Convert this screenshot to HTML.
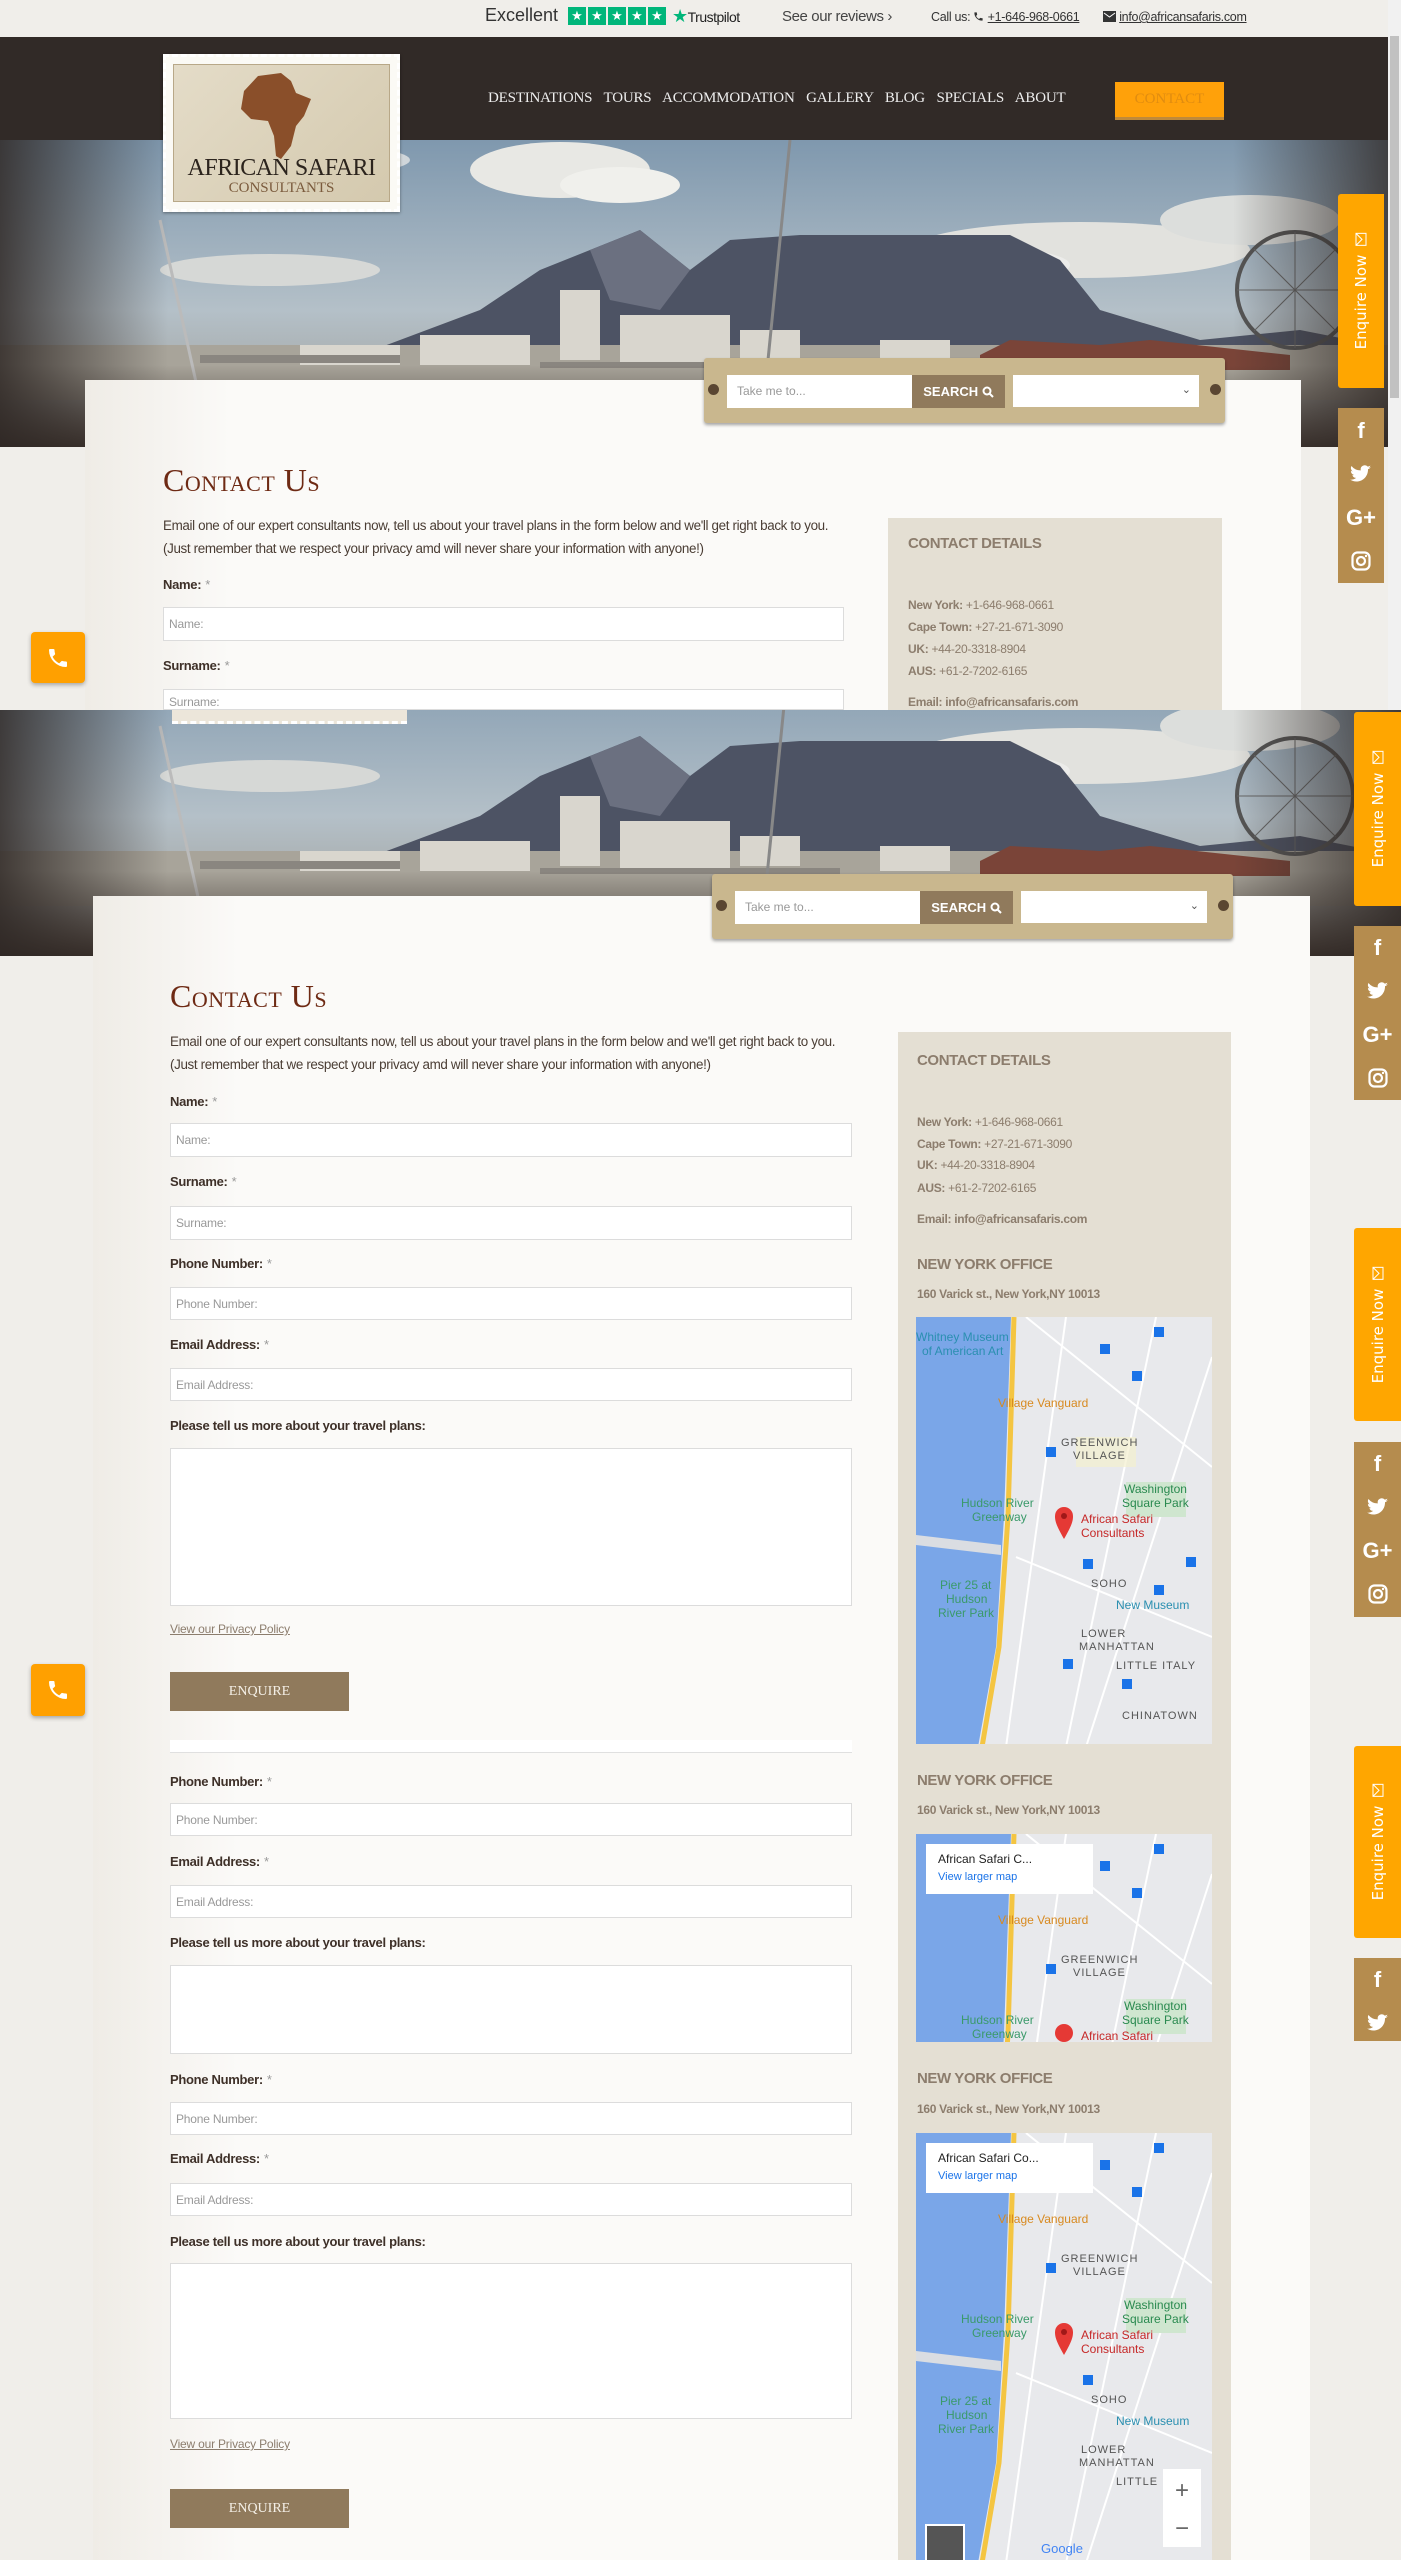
<!DOCTYPE html>
<html><head><meta charset="utf-8">
<style>
*{margin:0;padding:0;box-sizing:border-box}
html,body{width:1401px;height:2560px;overflow:hidden;background:#f0eeea;font-family:"Liberation Sans Narrow","Liberation Sans",sans-serif;}
.a{position:absolute}
.lab{position:absolute;font-size:13px;font-weight:bold;color:#3e3028;letter-spacing:-0.3px}
.lab i{font-style:normal;color:#999;font-weight:normal;margin-left:4px}
.inp{position:absolute;background:#fff;border:1px solid #dcdcdc;font-size:12px;color:#999;padding-left:5px;display:flex;align-items:center;letter-spacing:-0.2px}
.side{position:absolute;background:#e4dfd3}
.sd{position:absolute;font-size:12px;color:#8c7d6d;letter-spacing:-0.3px}
.sd b{font-weight:bold}
.sh{position:absolute;font-size:15px;font-weight:bold;color:#8c7d6d;letter-spacing:-0.4px}
.h1{position:absolute;font-family:"Liberation Serif",serif;font-variant:small-caps;font-size:32px;color:#6e2a14;letter-spacing:0.5px}
.intro{position:absolute;font-size:13.4px;color:#4a3d34;line-height:23px;letter-spacing:-0.35px}
.btn{position:absolute;background:#907a5c;color:#f4efe6;font-family:"Liberation Serif",serif;font-size:14px;display:flex;align-items:center;justify-content:center}
.priv{position:absolute;font-size:12px;color:#8c7d6d;text-decoration:underline;letter-spacing:-0.2px}
.enq{position:absolute;background:#ffa600;border-radius:3px 0 0 3px}
.enq span{position:absolute;left:50%;top:50%;transform:translate(-50%,-50%) rotate(-90deg);color:#fff;font-size:15px;white-space:nowrap;font-family:"DejaVu Sans",sans-serif;display:flex;align-items:center;gap:8px}
.soc{position:absolute;background:#b58c4e}
.soc div{height:43.5px;display:flex;align-items:center;justify-content:center;color:#fff;font-family:"Liberation Sans",sans-serif;font-weight:bold;font-size:22px}
.ph{position:absolute;background:#ffa000;border-radius:4px;box-shadow:0 2px 4px rgba(0,0,0,.3);display:flex;align-items:center;justify-content:center}
</style></head><body>

<!-- top bar -->
<div class="a" style="left:485px;top:5px;font-family:'Liberation Sans',sans-serif;font-size:18px;color:#333">Excellent</div>
<div class="a" style="left:568px;top:7px;display:flex;gap:2px">
<div style="width:18px;height:18px;background:#00b67a;color:#fff;font-size:13px;text-align:center;line-height:18px">★</div><div style="width:18px;height:18px;background:#00b67a;color:#fff;font-size:13px;text-align:center;line-height:18px">★</div><div style="width:18px;height:18px;background:#00b67a;color:#fff;font-size:13px;text-align:center;line-height:18px">★</div><div style="width:18px;height:18px;background:#00b67a;color:#fff;font-size:13px;text-align:center;line-height:18px">★</div><div style="width:18px;height:18px;background:#00b67a;color:#fff;font-size:13px;text-align:center;line-height:18px">★</div></div>
<div class="a" style="left:672px;top:6px;font-family:'Liberation Sans',sans-serif;font-size:14px;color:#222;letter-spacing:-0.5px"><span style="color:#00b67a;font-size:18px">★</span>Trustpilot</div>
<div class="a" style="left:782px;top:8px;font-size:15px;color:#444;letter-spacing:-0.4px">See our reviews ›</div>
<div class="a" style="left:931px;top:10px;font-size:12.5px;color:#333;letter-spacing:-0.3px">Call us: <svg width="11" height="11" viewBox="0 0 24 24" style="vertical-align:-1px"><path d="M6.6 10.8a15 15 0 0 0 6.6 6.6l2.2-2.2a1 1 0 0 1 1-.25 11.4 11.4 0 0 0 3.6.57 1 1 0 0 1 1 1V20a1 1 0 0 1-1 1A17 17 0 0 1 3 4a1 1 0 0 1 1-1h3.5a1 1 0 0 1 1 1c0 1.25.2 2.45.57 3.57a1 1 0 0 1-.25 1z" fill="#333"/></svg> <u>+1-646-968-0661</u></div>
<div class="a" style="left:1103px;top:10px;font-size:12.5px;color:#333;letter-spacing:-0.3px"><svg width="13" height="11" viewBox="0 0 13 11" style="vertical-align:-1px"><rect width="13" height="11" fill="#333"/><path d="M1 2 L6.5 6 L12 2" stroke="#fff" fill="none"/></svg> <u>info@africansafaris.com</u></div>
<!-- scrollbar -->
<div class="a" style="left:1388px;top:0;width:13px;height:710px;background:#f1f1f1"></div>
<div class="a" style="left:1390px;top:36px;width:9px;height:362px;background:#c1c1c1"></div>

<!-- header dark -->
<div class="a" style="left:0;top:37px;width:1388px;height:103px;background:#312a27"></div>
<div class="a" style="left:488px;top:90px;font-family:'Liberation Serif',serif;font-size:15px;color:#eee;word-spacing:8px;letter-spacing:-0.2px">DESTINATIONS TOURS ACCOMMODATION GALLERY BLOG SPECIALS ABOUT</div>
<div class="a" style="left:1115px;top:82px;width:109px;height:38px;background:#ffa10a;border-bottom:3px solid #c08a3a;color:#e08c10;font-family:'Liberation Serif',serif;font-size:15px;display:flex;align-items:center;justify-content:center">CONTACT</div>

<!-- hero 1 -->
<div class="a" style="left:0;top:140px;width:1388px;height:307px;overflow:hidden">
<svg width="1401" height="310" viewBox="0 0 1401 310">
<defs><linearGradient id="sk" x1="0" y1="0" x2="0" y2="1"><stop offset="0" stop-color="#7f98ae"/><stop offset=".55" stop-color="#b4c0c8"/><stop offset="1" stop-color="#9a958c"/></linearGradient>
<linearGradient id="vg" x1="0" y1="0" x2="1" y2="0"><stop offset="0" stop-color="#2e2724" stop-opacity=".85"/><stop offset=".12" stop-color="#2e2724" stop-opacity="0"/><stop offset=".88" stop-color="#2e2724" stop-opacity="0"/><stop offset="1" stop-color="#2e2724" stop-opacity=".85"/></linearGradient>
<linearGradient id="bt" x1="0" y1="0" x2="0" y2="1"><stop offset="0" stop-color="#3a302b" stop-opacity="0"/><stop offset="1" stop-color="#3a302b"/></linearGradient>
<g id="hero">
<rect width="1401" height="310" fill="url(#sk)"/>
<ellipse cx="560" cy="30" rx="90" ry="28" fill="#e8e8e4"/><ellipse cx="620" cy="45" rx="60" ry="18" fill="#f0f0ec"/>
<ellipse cx="1080" cy="110" rx="170" ry="28" fill="#e2e2de"/><ellipse cx="980" cy="125" rx="90" ry="18" fill="#ececea"/>
<ellipse cx="640" cy="150" rx="80" ry="22" fill="#e4e4e0"/><ellipse cx="270" cy="130" rx="110" ry="16" fill="#d6d8d6"/><ellipse cx="1250" cy="80" rx="90" ry="25" fill="#dcdedc"/><ellipse cx="330" cy="20" rx="80" ry="14" fill="#d0d6da"/>
<polygon points="360,215 480,170 540,130 590,110 640,90 690,130 730,100 800,95 1010,95 1060,120 1100,170 1200,200 1300,190 1401,210 1401,240 360,240" fill="#4d5364"/>
<polygon points="590,110 640,90 690,130 660,170 610,160" fill="#6b7080"/>
<rect x="0" y="205" width="1401" height="55" fill="#a8a49a"/>
<g fill="#d9d6ce"><rect x="560" y="150" width="40" height="70"/><rect x="620" y="175" width="110" height="50"/><rect x="420" y="195" width="110" height="30"/><rect x="740" y="190" width="60" height="30"/><rect x="300" y="205" width="100" height="20"/><rect x="880" y="200" width="70" height="25"/></g>
<g fill="#8a8680"><rect x="200" y="215" width="200" height="8"/><rect x="540" y="222" width="300" height="6"/></g>
<polygon points="980,215 1010,200 1100,205 1150,200 1290,215 1290,230 980,230" fill="#7a4438"/>
<circle cx="1295" cy="150" r="58" fill="none" stroke="#555" stroke-width="4"/>
<g stroke="#666" stroke-width="1"><line x1="1295" y1="92" x2="1295" y2="208"/><line x1="1237" y1="150" x2="1353" y2="150"/><line x1="1254" y1="109" x2="1336" y2="191"/><line x1="1336" y1="109" x2="1254" y2="191"/></g>
<line x1="790" y1="0" x2="760" y2="300" stroke="#888" stroke-width="3"/>
<line x1="160" y1="80" x2="200" y2="260" stroke="#bbb" stroke-width="3"/>
<rect x="0" y="225" width="1401" height="85" fill="url(#bt)"/>
<rect width="1401" height="310" fill="url(#vg)"/>
</g></defs>
<use href="#hero"/>
</svg></div>

<!-- logo -->
<div class="a" style="left:163px;top:54px;width:237px;height:158px;background:#fbfaf5;border:3px dashed #fff;box-shadow:0 1px 3px rgba(0,0,0,.4)">
<div style="position:absolute;left:7px;top:7px;right:7px;bottom:7px;background:linear-gradient(135deg,#e4dcc8,#d4c9ae);border:1px solid #b8a888"></div>
<svg class="a" style="left:70px;top:14px" width="80" height="90" viewBox="0 0 80 90"><path d="M22 5 L45 2 L55 10 L60 22 L75 28 L68 45 L60 55 L55 75 L45 88 L40 85 L38 65 L32 50 L15 48 L5 38 L8 20 Z" fill="#8a4f2a"/></svg>
<div class="a" style="left:0;width:231px;top:98px;text-align:center;font-family:'Liberation Serif',serif;font-size:24px;color:#2c241d;letter-spacing:-0.5px">AFRICAN SAFARI</div>
<div class="a" style="left:0;width:231px;top:123px;text-align:center;font-family:'Liberation Serif',serif;font-size:15px;color:#7a5a3c">CONSULTANTS</div>
</div>

<!-- panel 1 -->
<div class="a" style="left:85px;top:380px;width:1216px;height:330px;background:linear-gradient(90deg,#efece6,#fbfaf8 12%,#fbfaf8)"></div>
<div class="a" style="left:704px;top:358px;width:521px;height:65px;background:#c9b78e;border-radius:3px;box-shadow:0 2px 3px rgba(0,0,0,.35)">
<div class="a" style="left:4px;top:26px;width:11px;height:11px;border-radius:50%;background:#5a4632"></div>
<div class="a" style="right:4px;top:26px;width:11px;height:11px;border-radius:50%;background:#5a4632"></div>
<div class="a" style="left:23px;top:17px;width:185px;height:33px;background:#fff;font-size:12px;color:#999;padding:9px 10px">Take me to...</div>
<div class="a" style="left:208px;top:17px;width:93px;height:33px;background:#907a5c;color:#fff;font-size:13px;font-weight:bold;display:flex;align-items:center;justify-content:center">SEARCH&nbsp;<svg width="12" height="12" viewBox="0 0 12 12"><circle cx="5" cy="5" r="3.5" stroke="#fff" stroke-width="2" fill="none"/><line x1="7.5" y1="7.5" x2="11" y2="11" stroke="#fff" stroke-width="2"/></svg></div>
<div class="a" style="left:309px;top:17px;width:186px;height:32px;background:#fff;font-size:11px;color:#555;text-align:right;padding:8px 8px">⌄</div>
</div>
<div class="h1" style="left:163px;top:462px">Contact Us</div>
<div class="intro" style="left:163px;top:514px">Email one of our expert consultants now, tell us about your travel plans in the form below and we'll get right back to you.<br>(Just remember that we respect your privacy amd will never share your information with anyone!)</div>
<div class="lab" style="left:163px;top:577px">Name:<i>*</i></div>
<div class="inp" style="left:163px;top:607px;width:681px;height:34px">Name:</div>
<div class="lab" style="left:163px;top:658px">Surname:<i>*</i></div>
<div class="inp" style="left:163px;top:689px;width:681px;height:21px;align-items:flex-end">Surname:</div>
<div class="side" style="left:888px;top:518px;width:334px;height:192px"></div>
<div class="sh" style="left:908px;top:535px">CONTACT DETAILS</div>
<div class="sd" style="left:908px;top:598px"><b>New York:</b> +1-646-968-0661</div>
<div class="sd" style="left:908px;top:620px"><b>Cape Town:</b> +27-21-671-3090</div>
<div class="sd" style="left:908px;top:642px"><b>UK:</b> +44-20-3318-8904</div>
<div class="sd" style="left:908px;top:664px"><b>AUS:</b> +61-2-7202-6165</div>
<div class="sd" style="left:908px;top:695px"><b>Email: info@africansafaris.com</b></div>

<div class="enq" style="left:1338px;top:194px;width:46px;height:194px"><span>Enquire Now <svg width="14" height="12" viewBox="0 0 14 12"><rect x="1" y="1" width="12" height="10" fill="none" stroke="#fff"/><path d="M1 1 L7 7 L13 1" stroke="#fff" fill="none"/></svg></span></div>
<div class="soc" style="left:1338px;top:408px;width:46px;height:175px;padding-top:1px">
<div>f</div>
<div><svg width="22" height="20" viewBox="0 0 24 22"><path d="M23 3.6a9 9 0 0 1-2.6.7 4.6 4.6 0 0 0 2-2.5 9 9 0 0 1-2.9 1.1 4.5 4.5 0 0 0-7.7 4.1A12.8 12.8 0 0 1 1.5 2.2a4.5 4.5 0 0 0 1.4 6 4.5 4.5 0 0 1-2-.6v.1a4.5 4.5 0 0 0 3.6 4.4 4.5 4.5 0 0 1-2 .1 4.5 4.5 0 0 0 4.2 3.1A9 9 0 0 1 0 17.2a12.8 12.8 0 0 0 6.9 2c8.3 0 12.8-6.9 12.8-12.8v-.6A9 9 0 0 0 23 3.6z" fill="#fff"/></svg></div>
<div>G+</div>
<div><svg width="20" height="20" viewBox="0 0 20 20"><rect x="1.5" y="1.5" width="17" height="17" rx="5" stroke="#fff" stroke-width="2.2" fill="none"/><circle cx="10" cy="10" r="4" stroke="#fff" stroke-width="2.2" fill="none"/><circle cx="15" cy="5" r="1.2" fill="#fff"/></svg></div>
</div>
<div class="ph" style="left:31px;top:632px;width:54px;height:51px"><svg width="24" height="24" viewBox="0 0 24 24"><path d="M6.6 10.8a15 15 0 0 0 6.6 6.6l2.2-2.2a1 1 0 0 1 1-.25 11.4 11.4 0 0 0 3.6.57 1 1 0 0 1 1 1V20a1 1 0 0 1-1 1A17 17 0 0 1 3 4a1 1 0 0 1 1-1h3.5a1 1 0 0 1 1 1c0 1.25.2 2.45.57 3.57a1 1 0 0 1-.25 1z" fill="#fff"/></svg></div>

<!-- SECOND COPY -->
<div class="a" style="left:0;top:710px;width:1401px;height:253px;overflow:hidden">
<svg width="1401" height="310" viewBox="0 0 1401 310" style="position:absolute;left:0;top:-64px"><use href="#hero"/></svg></div>
<div class="a" style="left:172px;top:710px;width:235px;height:14px;background:#ece6da;border-bottom:3px dashed #fff"></div>

<div class="a" style="left:93px;top:896px;width:1217px;height:1664px;background:linear-gradient(90deg,#efece6,#fbfaf8 12%,#fbfaf8)"></div>
<div class="a" style="left:712px;top:874px;width:521px;height:65px;background:#c9b78e;border-radius:3px;box-shadow:0 2px 3px rgba(0,0,0,.35)">
<div class="a" style="left:4px;top:26px;width:11px;height:11px;border-radius:50%;background:#5a4632"></div>
<div class="a" style="right:4px;top:26px;width:11px;height:11px;border-radius:50%;background:#5a4632"></div>
<div class="a" style="left:23px;top:17px;width:185px;height:33px;background:#fff;font-size:12px;color:#999;padding:9px 10px">Take me to...</div>
<div class="a" style="left:208px;top:17px;width:93px;height:33px;background:#907a5c;color:#fff;font-size:13px;font-weight:bold;display:flex;align-items:center;justify-content:center">SEARCH&nbsp;<svg width="12" height="12" viewBox="0 0 12 12"><circle cx="5" cy="5" r="3.5" stroke="#fff" stroke-width="2" fill="none"/><line x1="7.5" y1="7.5" x2="11" y2="11" stroke="#fff" stroke-width="2"/></svg></div>
<div class="a" style="left:309px;top:17px;width:186px;height:32px;background:#fff;font-size:11px;color:#555;text-align:right;padding:8px 8px">⌄</div>
</div>
<div class="h1" style="left:170px;top:978px">Contact Us</div>
<div class="intro" style="left:170px;top:1030px">Email one of our expert consultants now, tell us about your travel plans in the form below and we'll get right back to you.<br>(Just remember that we respect your privacy amd will never share your information with anyone!)</div>

<div class="lab" style="left:170px;top:1094px">Name:<i>*</i></div>
<div class="inp" style="left:170px;top:1123px;width:682px;height:34px">Name:</div>
<div class="lab" style="left:170px;top:1174px">Surname:<i>*</i></div>
<div class="inp" style="left:170px;top:1206px;width:682px;height:34px">Surname:</div>
<div class="lab" style="left:170px;top:1256px">Phone Number:<i>*</i></div>
<div class="inp" style="left:170px;top:1287px;width:682px;height:33px">Phone Number:</div>
<div class="lab" style="left:170px;top:1337px">Email Address:<i>*</i></div>
<div class="inp" style="left:170px;top:1368px;width:682px;height:33px">Email Address:</div>
<div class="lab" style="left:170px;top:1418px">Please tell us more about your travel plans:</div>
<div class="inp" style="left:170px;top:1448px;width:682px;height:158px"></div>
<div class="priv" style="left:170px;top:1622px">View our Privacy Policy</div>
<div class="btn" style="left:170px;top:1672px;width:179px;height:39px">ENQUIRE</div>

<div class="a" style="left:170px;top:1740px;width:682px;height:13px;background:#fff;border-bottom:1px solid #e0e0e0"></div>
<div class="lab" style="left:170px;top:1774px">Phone Number:<i>*</i></div>
<div class="inp" style="left:170px;top:1803px;width:682px;height:33px">Phone Number:</div>
<div class="lab" style="left:170px;top:1854px">Email Address:<i>*</i></div>
<div class="inp" style="left:170px;top:1885px;width:682px;height:33px">Email Address:</div>
<div class="lab" style="left:170px;top:1935px">Please tell us more about your travel plans:</div>
<div class="inp" style="left:170px;top:1965px;width:682px;height:89px"></div>
<div class="lab" style="left:170px;top:2072px">Phone Number:<i>*</i></div>
<div class="inp" style="left:170px;top:2102px;width:682px;height:33px">Phone Number:</div>
<div class="lab" style="left:170px;top:2151px">Email Address:<i>*</i></div>
<div class="inp" style="left:170px;top:2183px;width:682px;height:33px">Email Address:</div>
<div class="lab" style="left:170px;top:2234px">Please tell us more about your travel plans:</div>
<div class="inp" style="left:170px;top:2263px;width:682px;height:156px"></div>
<div class="priv" style="left:170px;top:2437px">View our Privacy Policy</div>
<div class="btn" style="left:170px;top:2489px;width:179px;height:39px">ENQUIRE</div>

<!-- sidebar 2 -->
<div class="side" style="left:898px;top:1032px;width:333px;height:1528px"></div>
<div class="sh" style="left:917px;top:1052px">CONTACT DETAILS</div>
<div class="sd" style="left:917px;top:1115px"><b>New York:</b> +1-646-968-0661</div>
<div class="sd" style="left:917px;top:1137px"><b>Cape Town:</b> +27-21-671-3090</div>
<div class="sd" style="left:917px;top:1158px"><b>UK:</b> +44-20-3318-8904</div>
<div class="sd" style="left:917px;top:1181px"><b>AUS:</b> +61-2-7202-6165</div>
<div class="sd" style="left:917px;top:1212px"><b>Email: info@africansafaris.com</b></div>

<div class="sh" style="left:917px;top:1256px">NEW YORK OFFICE</div>
<div class="sd" style="left:917px;top:1287px"><b>160 Varick st., New York,NY 10013</b></div>
<div class="sh" style="left:917px;top:1772px">NEW YORK OFFICE</div>
<div class="sd" style="left:917px;top:1803px"><b>160 Varick st., New York,NY 10013</b></div>
<div class="sh" style="left:917px;top:2070px">NEW YORK OFFICE</div>
<div class="sd" style="left:917px;top:2102px"><b>160 Varick st., New York,NY 10013</b></div>

<!-- maps -->
<div class="a" style="left:916px;top:1317px;width:296px;height:427px;overflow:hidden">
<svg width="296" height="430" viewBox="0 0 296 430" font-family="Liberation Sans,sans-serif">
<rect width="296" height="430" fill="#e8e9ec"/>
<polygon points="0,0 95,0 88,200 80,330 62,430 0,430" fill="#7aa6e8"/>
<polygon points="0,218 85,228 85,238 0,228" fill="#dadde2"/>
<path d="M98 0 L92 200 L83 330 L66 430" stroke="#f4c542" stroke-width="5" fill="none"/>
<g stroke="#fff" stroke-width="2"><line x1="110" y1="0" x2="296" y2="150"/><line x1="150" y1="0" x2="90" y2="430"/><line x1="240" y1="0" x2="150" y2="430"/><line x1="100" y1="240" x2="296" y2="320"/><line x1="296" y1="40" x2="170" y2="430"/></g>
<rect x="160" y="120" width="60" height="30" fill="#f3efcf" opacity=".7"/><rect x="210" y="165" width="60" height="35" fill="#cfe6cf"/>
<text x="0" y="24" font-size="12" fill="#2a8fb0">Whitney Museum</text><text x="6" y="38" font-size="12" fill="#2a8fb0">of American Art</text>
<text x="82" y="90" font-size="12" fill="#d88a20">Village Vanguard</text>
<text x="145" y="129" font-size="11" fill="#555" letter-spacing="1">GREENWICH</text><text x="157" y="142" font-size="11" fill="#555" letter-spacing="1">VILLAGE</text>
<text x="208" y="176" font-size="12" fill="#2a8a50">Washington</text><text x="206" y="190" font-size="12" fill="#2a8a50">Square Park</text>
<text x="45" y="190" font-size="12" fill="#3a9a6a">Hudson River</text><text x="56" y="204" font-size="12" fill="#3a9a6a">Greenway</text>
<path d="M148 222 C140 208 139 204 139 199 a9 9 0 1 1 18 0 C157 204 156 208 148 222 Z" fill="#e53935"/><circle cx="148" cy="199" r="3" fill="#a01818"/>
<text x="165" y="206" font-size="12" fill="#c62828">African Safari</text><text x="165" y="220" font-size="12" fill="#c62828">Consultants</text>
<text x="175" y="270" font-size="11" fill="#555" letter-spacing="1">SOHO</text>
<text x="200" y="292" font-size="12" fill="#2a8fb0">New Museum</text>
<text x="24" y="272" font-size="12" fill="#3a9a6a">Pier 25 at</text><text x="30" y="286" font-size="12" fill="#3a9a6a">Hudson</text><text x="22" y="300" font-size="12" fill="#3a9a6a">River Park</text>
<text x="165" y="320" font-size="11" fill="#555" letter-spacing="1">LOWER</text><text x="163" y="333" font-size="11" fill="#555" letter-spacing="1">MANHATTAN</text>
<text x="200" y="352" font-size="11" fill="#555" letter-spacing="1">LITTLE ITALY</text>
<text x="206" y="402" font-size="11" fill="#555" letter-spacing="1">CHINATOWN</text>
<g fill="#1a73e8"><rect x="238" y="10" width="10" height="10"/><rect x="184" y="27" width="10" height="10"/><rect x="216" y="54" width="10" height="10"/><rect x="130" y="130" width="10" height="10"/><rect x="270" y="240" width="10" height="10"/><rect x="167" y="242" width="10" height="10"/><rect x="238" y="268" width="10" height="10"/><rect x="147" y="342" width="10" height="10"/><rect x="206" y="362" width="10" height="10"/></g>
</svg></div>

<div class="a" style="left:916px;top:1834px;width:296px;height:208px;overflow:hidden">
<svg width="296" height="430" viewBox="0 0 296 430" font-family="Liberation Sans,sans-serif">
<rect width="296" height="430" fill="#e8e9ec"/>
<polygon points="0,0 95,0 88,200 80,330 62,430 0,430" fill="#7aa6e8"/>
<path d="M98 0 L92 200 L83 330 L66 430" stroke="#f4c542" stroke-width="5" fill="none"/>
<g stroke="#fff" stroke-width="2"><line x1="110" y1="0" x2="296" y2="150"/><line x1="150" y1="0" x2="90" y2="430"/><line x1="240" y1="0" x2="150" y2="430"/><line x1="296" y1="40" x2="170" y2="430"/></g>
<rect x="210" y="165" width="60" height="35" fill="#cfe6cf"/>
<text x="82" y="90" font-size="12" fill="#d88a20">Village Vanguard</text>
<text x="145" y="129" font-size="11" fill="#555" letter-spacing="1">GREENWICH</text><text x="157" y="142" font-size="11" fill="#555" letter-spacing="1">VILLAGE</text>
<text x="208" y="176" font-size="12" fill="#2a8a50">Washington</text><text x="206" y="190" font-size="12" fill="#2a8a50">Square Park</text>
<text x="45" y="190" font-size="12" fill="#3a9a6a">Hudson River</text><text x="56" y="204" font-size="12" fill="#3a9a6a">Greenway</text>
<circle cx="148" cy="199" r="9" fill="#e53935"/>
<text x="165" y="206" font-size="12" fill="#c62828">African Safari</text>
<g fill="#1a73e8"><rect x="238" y="10" width="10" height="10"/><rect x="184" y="27" width="10" height="10"/><rect x="216" y="54" width="10" height="10"/><rect x="130" y="130" width="10" height="10"/></g>
<rect x="10" y="10" width="167" height="50" fill="#fff"/>
<text x="22" y="29" font-size="12" fill="#222">African Safari C...</text><text x="22" y="46" font-size="11" fill="#1a73e8">View larger map</text>
</svg></div>

<div class="a" style="left:916px;top:2133px;width:296px;height:427px;overflow:hidden">
<svg width="296" height="430" viewBox="0 0 296 430" font-family="Liberation Sans,sans-serif">
<rect width="296" height="430" fill="#e8e9ec"/>
<polygon points="0,0 95,0 88,200 80,330 62,430 0,430" fill="#7aa6e8"/>
<polygon points="0,218 85,228 85,238 0,228" fill="#dadde2"/>
<path d="M98 0 L92 200 L83 330 L66 430" stroke="#f4c542" stroke-width="5" fill="none"/>
<g stroke="#fff" stroke-width="2"><line x1="110" y1="0" x2="296" y2="150"/><line x1="150" y1="0" x2="90" y2="430"/><line x1="240" y1="0" x2="150" y2="430"/><line x1="100" y1="240" x2="296" y2="320"/><line x1="296" y1="40" x2="170" y2="430"/></g>
<rect x="210" y="165" width="60" height="35" fill="#cfe6cf"/>
<text x="82" y="90" font-size="12" fill="#d88a20">Village Vanguard</text>
<text x="145" y="129" font-size="11" fill="#555" letter-spacing="1">GREENWICH</text><text x="157" y="142" font-size="11" fill="#555" letter-spacing="1">VILLAGE</text>
<text x="208" y="176" font-size="12" fill="#2a8a50">Washington</text><text x="206" y="190" font-size="12" fill="#2a8a50">Square Park</text>
<text x="45" y="190" font-size="12" fill="#3a9a6a">Hudson River</text><text x="56" y="204" font-size="12" fill="#3a9a6a">Greenway</text>
<path d="M148 222 C140 208 139 204 139 199 a9 9 0 1 1 18 0 C157 204 156 208 148 222 Z" fill="#e53935"/><circle cx="148" cy="199" r="3" fill="#a01818"/>
<text x="165" y="206" font-size="12" fill="#c62828">African Safari</text><text x="165" y="220" font-size="12" fill="#c62828">Consultants</text>
<text x="175" y="270" font-size="11" fill="#555" letter-spacing="1">SOHO</text>
<text x="200" y="292" font-size="12" fill="#2a8fb0">New Museum</text>
<text x="24" y="272" font-size="12" fill="#3a9a6a">Pier 25 at</text><text x="30" y="286" font-size="12" fill="#3a9a6a">Hudson</text><text x="22" y="300" font-size="12" fill="#3a9a6a">River Park</text>
<text x="165" y="320" font-size="11" fill="#555" letter-spacing="1">LOWER</text><text x="163" y="333" font-size="11" fill="#555" letter-spacing="1">MANHATTAN</text>
<text x="200" y="352" font-size="11" fill="#555" letter-spacing="1">LITTLE</text>
<g fill="#1a73e8"><rect x="238" y="10" width="10" height="10"/><rect x="184" y="27" width="10" height="10"/><rect x="216" y="54" width="10" height="10"/><rect x="130" y="130" width="10" height="10"/><rect x="167" y="242" width="10" height="10"/></g>
<rect x="10" y="10" width="167" height="50" fill="#fff"/>
<text x="22" y="29" font-size="12" fill="#222">African Safari Co...</text><text x="22" y="46" font-size="11" fill="#1a73e8">View larger map</text>
<rect x="247" y="336" width="38" height="78" fill="#fff"/>
<text x="266" y="365" font-size="24" fill="#666" text-anchor="middle">+</text><text x="266" y="403" font-size="24" fill="#666" text-anchor="middle">−</text>
<rect x="10" y="392" width="38" height="38" fill="#555" stroke="#fff" stroke-width="2"/>
<text x="125" y="420" font-size="13" fill="#4285f4">Google</text>
</svg></div>

<!-- right tabs 2 -->
<div class="enq" style="left:1354px;top:712px;width:47px;height:194px"><span>Enquire Now <svg width="14" height="12" viewBox="0 0 14 12"><rect x="1" y="1" width="12" height="10" fill="none" stroke="#fff"/><path d="M1 1 L7 7 L13 1" stroke="#fff" fill="none"/></svg></span></div>
<div class="soc" style="left:1354px;top:926px;width:47px;height:174px">
<div>f</div>
<div><svg width="22" height="20" viewBox="0 0 24 22"><path d="M23 3.6a9 9 0 0 1-2.6.7 4.6 4.6 0 0 0 2-2.5 9 9 0 0 1-2.9 1.1 4.5 4.5 0 0 0-7.7 4.1A12.8 12.8 0 0 1 1.5 2.2a4.5 4.5 0 0 0 1.4 6 4.5 4.5 0 0 1-2-.6v.1a4.5 4.5 0 0 0 3.6 4.4 4.5 4.5 0 0 1-2 .1 4.5 4.5 0 0 0 4.2 3.1A9 9 0 0 1 0 17.2a12.8 12.8 0 0 0 6.9 2c8.3 0 12.8-6.9 12.8-12.8v-.6A9 9 0 0 0 23 3.6z" fill="#fff"/></svg></div>
<div>G+</div>
<div><svg width="20" height="20" viewBox="0 0 20 20"><rect x="1.5" y="1.5" width="17" height="17" rx="5" stroke="#fff" stroke-width="2.2" fill="none"/><circle cx="10" cy="10" r="4" stroke="#fff" stroke-width="2.2" fill="none"/><circle cx="15" cy="5" r="1.2" fill="#fff"/></svg></div>
</div>
<div class="enq" style="left:1354px;top:1228px;width:47px;height:193px"><span>Enquire Now <svg width="14" height="12" viewBox="0 0 14 12"><rect x="1" y="1" width="12" height="10" fill="none" stroke="#fff"/><path d="M1 1 L7 7 L13 1" stroke="#fff" fill="none"/></svg></span></div>
<div class="soc" style="left:1354px;top:1442px;width:47px;height:175px">
<div>f</div>
<div><svg width="22" height="20" viewBox="0 0 24 22"><path d="M23 3.6a9 9 0 0 1-2.6.7 4.6 4.6 0 0 0 2-2.5 9 9 0 0 1-2.9 1.1 4.5 4.5 0 0 0-7.7 4.1A12.8 12.8 0 0 1 1.5 2.2a4.5 4.5 0 0 0 1.4 6 4.5 4.5 0 0 1-2-.6v.1a4.5 4.5 0 0 0 3.6 4.4 4.5 4.5 0 0 1-2 .1 4.5 4.5 0 0 0 4.2 3.1A9 9 0 0 1 0 17.2a12.8 12.8 0 0 0 6.9 2c8.3 0 12.8-6.9 12.8-12.8v-.6A9 9 0 0 0 23 3.6z" fill="#fff"/></svg></div>
<div>G+</div>
<div><svg width="20" height="20" viewBox="0 0 20 20"><rect x="1.5" y="1.5" width="17" height="17" rx="5" stroke="#fff" stroke-width="2.2" fill="none"/><circle cx="10" cy="10" r="4" stroke="#fff" stroke-width="2.2" fill="none"/><circle cx="15" cy="5" r="1.2" fill="#fff"/></svg></div>
</div>
<div class="enq" style="left:1354px;top:1746px;width:47px;height:192px"><span>Enquire Now <svg width="14" height="12" viewBox="0 0 14 12"><rect x="1" y="1" width="12" height="10" fill="none" stroke="#fff"/><path d="M1 1 L7 7 L13 1" stroke="#fff" fill="none"/></svg></span></div>
<div class="soc" style="left:1354px;top:1958px;width:47px;height:83px">
<div>f</div>
<div><svg width="22" height="20" viewBox="0 0 24 22"><path d="M23 3.6a9 9 0 0 1-2.6.7 4.6 4.6 0 0 0 2-2.5 9 9 0 0 1-2.9 1.1 4.5 4.5 0 0 0-7.7 4.1A12.8 12.8 0 0 1 1.5 2.2a4.5 4.5 0 0 0 1.4 6 4.5 4.5 0 0 1-2-.6v.1a4.5 4.5 0 0 0 3.6 4.4 4.5 4.5 0 0 1-2 .1 4.5 4.5 0 0 0 4.2 3.1A9 9 0 0 1 0 17.2a12.8 12.8 0 0 0 6.9 2c8.3 0 12.8-6.9 12.8-12.8v-.6A9 9 0 0 0 23 3.6z" fill="#fff"/></svg></div>
</div>
<div class="ph" style="left:31px;top:1664px;width:54px;height:52px"><svg width="24" height="24" viewBox="0 0 24 24"><path d="M6.6 10.8a15 15 0 0 0 6.6 6.6l2.2-2.2a1 1 0 0 1 1-.25 11.4 11.4 0 0 0 3.6.57 1 1 0 0 1 1 1V20a1 1 0 0 1-1 1A17 17 0 0 1 3 4a1 1 0 0 1 1-1h3.5a1 1 0 0 1 1 1c0 1.25.2 2.45.57 3.57a1 1 0 0 1-.25 1z" fill="#fff"/></svg></div>
</body></html>
